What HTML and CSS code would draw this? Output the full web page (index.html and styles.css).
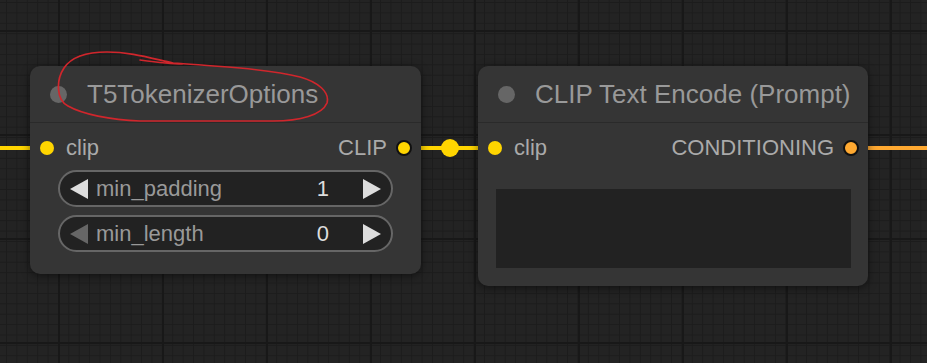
FILE: index.html
```html
<!DOCTYPE html>
<html lang="en">
<head>
    <meta charset="UTF-8">
    <meta name="viewport" content="width=device-width, initial-scale=1.0">
    <title>Node Graph</title>
    <link rel="stylesheet" href="styles.css">
</head>
<body>

    <div class="canvas">
        <!-- links -->
        <div class="wire wire-in"></div>
        <div class="wire wire-mid"></div>
        <div class="wire-knob"></div>
        <div class="wire wire-out"></div>

        <div class="node node-t5">
            <div class="node-title">
                <span class="title-dot"></span>
                <span>T5TokenizerOptions</span>
            </div>
            <div class="node-body">
                <div class="slots">
                    <div class="slot"><span class="dot dot-clip"></span>clip</div>
                    <div class="slot slot-out">CLIP<span class="dot dot-clip dot-ring"></span></div>
                </div>
                <div class="widget">
                    <svg class="arrow" width="18" height="20" viewBox="0 0 18 20"><polygon points="18,0 18,20 0,10" fill="#ddd"/></svg>
                    <span class="w-name">min_padding</span>
                    <span class="w-value">1</span>
                    <svg class="arrow" width="18" height="20" viewBox="0 0 18 20"><polygon points="0,0 0,20 18,10" fill="#ddd"/></svg>
                </div>
                <div class="widget">
                    <svg class="arrow" width="18" height="20" viewBox="0 0 18 20"><polygon points="18,0 18,20 0,10" fill="#666"/></svg>
                    <span class="w-name">min_length</span>
                    <span class="w-value">0</span>
                    <svg class="arrow" width="18" height="20" viewBox="0 0 18 20"><polygon points="0,0 0,20 18,10" fill="#ddd"/></svg>
                </div>
            </div>
        </div>

        <div class="node node-clip">
            <div class="node-title">
                <span class="title-dot"></span>
                <span>CLIP Text Encode (Prompt)</span>
            </div>
            <div class="node-body">
                <div class="slots">
                    <div class="slot"><span class="dot dot-clip"></span>clip</div>
                    <div class="slot slot-out">CONDITIONING<span class="dot dot-cond dot-ring"></span></div>
                </div>
                <div class="prompt-box"></div>
            </div>
        </div>

        <!-- red pen mark over the first title -->
        <svg class="scribble" width="400" height="150" viewBox="0 0 400 150">
            <path d="M173 63 C 150 58, 130 52, 107 52 C 90 52, 72 56, 64 68 C 56 80, 56 100, 68 106 C 82 114, 110 120, 140 121 L 273 121 C 300 121, 322 115, 327 103 C 330 92, 318 82, 300 77 C 280 72, 260 70, 240 68 C 215 66, 190 64, 173 63 M 140 60 C 155 62, 170 64, 182 64" fill="none" stroke="#d0262c" stroke-width="1.7" stroke-linecap="round"/>
        </svg>
    </div>

</body>
</html>
```

FILE: styles.css
```css
body { margin: 0; font-family: "Liberation Sans", Arial, sans-serif; background: #222; }
.canvas {
    position: relative; width: 927px; height: 363px; overflow: hidden;
    background-color: #232323;
    background-image:
        linear-gradient(90deg, #181818 2px, transparent 2px),
        linear-gradient(#181818 2px, transparent 2px),
        linear-gradient(90deg, #1c1c1c 1px, transparent 1px),
        linear-gradient(#1c1c1c 1px, transparent 1px);
    background-size: 104px 104px, 104px 104px, 10.4px 10.4px, 10.4px 10.4px;
    background-position: 58px 30px, 58px 30px, 6px 2px, 6px 2px;
}

.node {
    position: absolute;
    background: #353535; border-radius: 10px;
    box-shadow: 0 2px 8px rgba(0, 0, 0, 0.5);
    color: #aaa;
}
.node-t5 { left: 30px; top: 66px; width: 391px; height: 208px; }
.node-clip { left: 478px; top: 66px; width: 390px; height: 220px; }

.node-title {
    height: 56px; display: flex; align-items: center; gap: 20px;
    padding-left: 20px; font-size: 26px; color: #999;
    border-bottom: 1px solid #2a2a2a;
}
.title-dot { width: 17px; height: 17px; border-radius: 50%; background: #666; }

.slots {
    display: flex; justify-content: space-between; align-items: center;
    height: 28px; margin-top: 11px; padding: 0 9px 0 10px;
    font-size: 22px;
}
.slot { display: flex; align-items: center; gap: 12px; }
.slot-out { gap: 9px; }
.dot { width: 14px; height: 14px; border-radius: 50%; box-sizing: border-box; }
.dot-clip { background: #ffd500; }
.dot-cond { background: #ffa931; }
.dot-ring { border: 2px solid #111; width: 16px; height: 16px; }

.widget {
    display: flex; align-items: center;
    height: 37px; margin: 8px 28px 0 28px; box-sizing: border-box;
    background: #222; border: 2px solid #666; border-radius: 19px;
    padding: 0 10px; font-size: 22px; color: #999;
}
.arrow { flex: none; }
.w-name { flex: 1; padding-left: 8px; }
.w-value { color: #ddd; padding-right: 34px; }

.prompt-box {
    height: 79px; margin: 27px 17px 0 18px;
    background: #222;
}

.wire { position: absolute; height: 4px; }
.wire-in { left: 0; top: 146px; width: 32px; background: #ffd500; }
.wire-mid { left: 410px; top: 146px; width: 80px; background: #ffd500; }
.wire-knob {
    position: absolute; left: 441px; top: 139px;
    width: 18px; height: 18px; border-radius: 50%; background: #ffd500;
}
.wire-out { left: 866px; top: 146px; width: 61px; background: #ffa931; }

.scribble { position: absolute; left: 0; top: 0; }
```
